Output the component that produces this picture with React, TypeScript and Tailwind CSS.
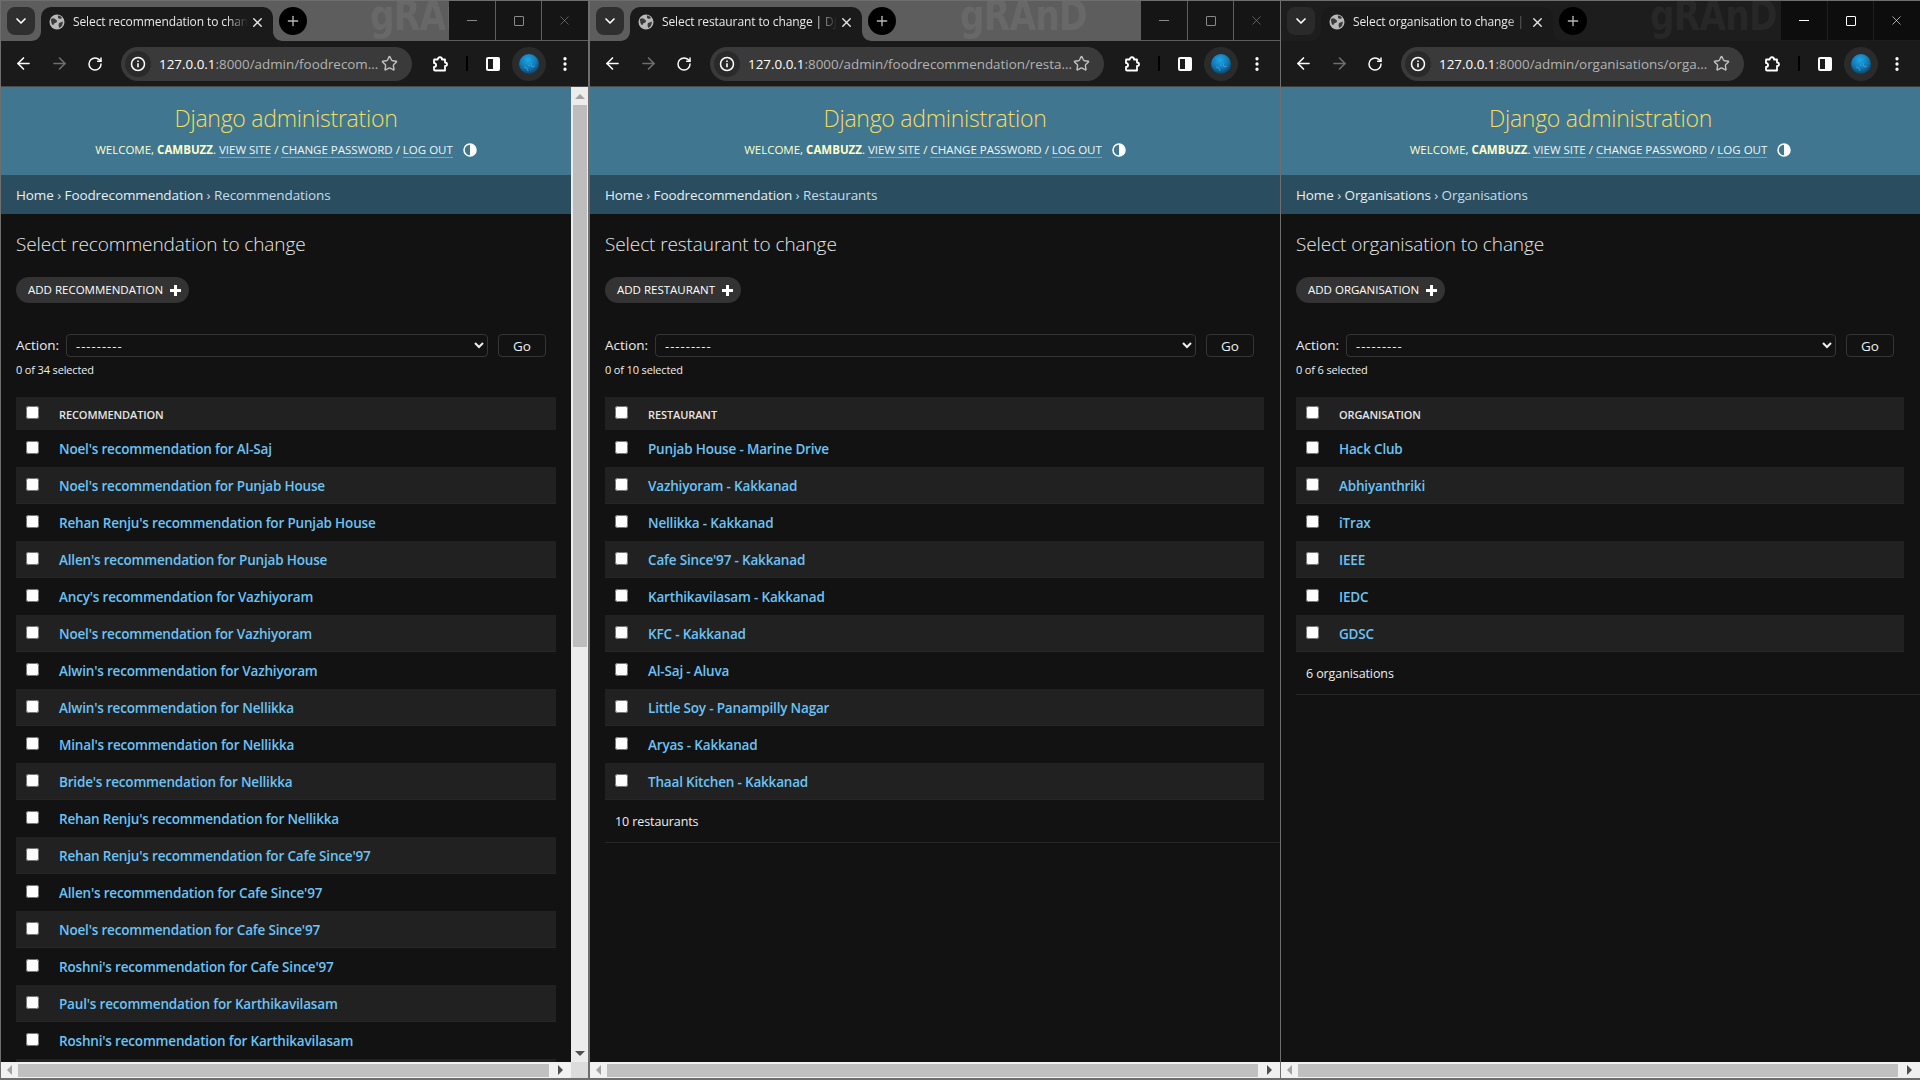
import React from "react";
import { ArrowLeft, ArrowRight, RotateCw, Star, Plus, X, ChevronDown, EllipsisVertical } from "lucide-react";

const recs = [
  "Noel's recommendation for Al-Saj",
  "Noel's recommendation for Punjab House",
  "Rehan Renju's recommendation for Punjab House",
  "Allen's recommendation for Punjab House",
  "Ancy's recommendation for Vazhiyoram",
  "Noel's recommendation for Vazhiyoram",
  "Alwin's recommendation for Vazhiyoram",
  "Alwin's recommendation for Nellikka",
  "Minal's recommendation for Nellikka",
  "Bride's recommendation for Nellikka",
  "Rehan Renju's recommendation for Nellikka",
  "Rehan Renju's recommendation for Cafe Since'97",
  "Allen's recommendation for Cafe Since'97",
  "Noel's recommendation for Cafe Since'97",
  "Roshni's recommendation for Cafe Since'97",
  "Paul's recommendation for Karthikavilasam",
  "Roshni's recommendation for Karthikavilasam",
  "Allen's recommendation for Karthikavilasam",
];
const rests = [
  "Punjab House - Marine Drive",
  "Vazhiyoram - Kakkanad",
  "Nellikka - Kakkanad",
  "Cafe Since'97 - Kakkanad",
  "Karthikavilasam - Kakkanad",
  "KFC - Kakkanad",
  "Al-Saj - Aluva",
  "Little Soy - Panampilly Nagar",
  "Aryas - Kakkanad",
  "Thaal Kitchen - Kakkanad",
];
const orgs = ["Hack Club", "Abhiyanthriki", "iTrax", "IEEE", "IEDC", "GDSC"];

function GlobeFav() {
  return (
    <svg width="16" height="16" viewBox="0 0 16 16" className="shrink-0">
      <circle cx="8" cy="8" r="7.5" fill="#b9b9b9" />
      <path d="M2 5c2-1 3-1 4 0s2 1 2 2-1 2-2 2-1 2-2 2-2-3-2-6zM9 1.500c2 .2 3 1 4 2.500l-2 1-2-1zM10 9c1 0 2-1 3.800-1.500C14 10 13 12.500 10.500 14c-1-1-.5-2-1-3z" fill="#3a3a3a" />
    </svg>
  );
}

function ExtIcon() {
  return (
    <svg width="18" height="18" viewBox="0 0 18 18" fill="none" stroke="#fff" strokeWidth="1.800" strokeLinejoin="round">
      <path d="M2.500 4.500h3.200c0-3 4.300-3 4.300 0h3v3c2.700 0 2.700 3.500 0 3.500v4.500H3c-.6 0-1-.4-1-1v-2.500c2.800 0 2.800-4 0-4V5c0-.3.200-.5.500-.5z" />
    </svg>
  );
}

function Avatar() {
  return (
    <div className="w-[34px] h-[34px] rounded-full bg-[#2b2b2b] flex items-center justify-center">
      <svg width="20" height="20" viewBox="0 0 20 20">
        <defs>
          <radialGradient id="gl" cx="45%" cy="30%" r="75%">
            <stop offset="0%" stopColor="#1ea7e6" />
            <stop offset="55%" stopColor="#0f79b8" />
            <stop offset="100%" stopColor="#0b3a5c" />
          </radialGradient>
        </defs>
        <circle cx="10" cy="10" r="10" fill="url(#gl)" />
        <path d="M5 13l3 1 1 3M12 9l1 4 3-1M9 11l2 1" stroke="#5f9fc4" strokeWidth="0.700" fill="none" />
      </svg>
    </div>
  );
}

function TabCorner({ side, color }: { side: "l" | "r"; color: string }) {
  return (
    <svg
      width="10"
      height="10"
      viewBox="0 0 10 10"
      className={side === "l" ? "absolute bottom-0 -left-[10px]" : "absolute bottom-0 -right-[10px]"}
    >
      <path d={side === "l" ? "M10 0v10H0c6 0 10-4 10-10z" : "M0 0v10h10C4 10 0 6 0 0z"} fill={color} />
    </svg>
  );
}

function Triangle({ dir, color }: { dir: "l" | "r" | "u" | "d"; color: string }) {
  const d = { l: "M6 0v10L1 5z", r: "M1 0v10l5-5z", u: "M0 6h10L5 1z", d: "M0 1h10L5 6z" }[dir];
  const s = dir === "l" || dir === "r" ? { w: 7, h: 10 } : { w: 10, h: 7 };
  return (
    <svg width={s.w} height={s.h} viewBox={`0 0 ${s.w} ${s.h}`}>
      <path d={d} fill={color} />
    </svg>
  );
}

function Chrome({
  active,
  title,
  urlRest,
  logoClass,
}: {
  active?: boolean;
  title: string;
  urlRest: string;
  logoClass: string;
}) {
  return (
    <>
      <div className={`relative h-[40px] shrink-0 flex overflow-hidden ${active ? "bg-[#1d1d1d]" : "bg-[#5d5d5d]"}`}>
        <span
          className={`absolute top-[-10px] origin-left font-['DejaVu_Sans'] font-bold text-[42px] leading-[50px] tracking-[-1px] scale-x-[0.82] select-none ${logoClass} ${
            active ? "text-[#272727]" : "text-[#686868]"
          }`}
        >
          gRAnD
        </span>
        <div className="relative flex-1 flex items-start pt-[6px] pl-[6px]">
          <div className={`w-[28px] h-[28px] rounded-[8px] flex items-center justify-center ${active ? "bg-[#2a2a2a]" : "bg-[#2f2f2f]"}`}>
            <ChevronDown size={16} color="#fff" strokeWidth={2.5} />
          </div>
          <div className="relative ml-[6px] w-[232px] h-[34px] rounded-t-[10px] bg-[#1a1a1a] flex items-center pl-[8px] pb-[4px]">
            <TabCorner side="l" color="#1a1a1a" />
            <TabCorner side="r" color="#1a1a1a" />
            <GlobeFav />
            <span className="ml-[8px] w-[175px] overflow-hidden whitespace-nowrap text-[12px] tracking-[-0.1px] text-[#e8e8e8] [mask-image:linear-gradient(to_right,black_88%,transparent)]">
              {title}
            </span>
            <X size={15} color="#e8e8e8" strokeWidth={2.2} className="ml-[2px]" />
          </div>
          <div className="ml-[6px] w-[28px] h-[28px] rounded-full bg-black flex items-center justify-center">
            <Plus size={16} color="#b8b8b8" strokeWidth={2} />
          </div>
        </div>
        <div className={`relative flex h-[39px] pr-px ${active ? "bg-[#0d0d0d]" : "bg-[#151515]"}`}>
          {[0, 1, 2].map((i) => (
            <div
              key={i}
              className={`w-[46px] flex items-center justify-center ${i > 0 ? (active ? "border-l border-[#1f1f1f]" : "border-l border-[#5f5f5f]") : ""}`}
            >
              {i === 0 && <div className={`w-[10px] h-px ${active ? "bg-white" : "bg-[#8a8a8a]"}`} />}
              {i === 1 && <div className={`w-[10px] h-[10px] rounded-[1px] border ${active ? "border-white" : "border-[#8a8a8a]"}`} />}
              {i === 2 && <X size={15} color={active ? "#fff" : "#8a8a8a"} strokeWidth={1} />}
            </div>
          ))}
        </div>
      </div>
      <div className={`h-[46px] shrink-0 flex items-center pl-[4px] pr-[5px] bg-[#1a1a1a] border-b ${active ? "border-[#3a3a3a]" : "border-[#4a4a4a]"}`}>
        <div className="w-[36px] flex justify-center"><ArrowLeft size={19} color="#fff" strokeWidth={2} /></div>
        <div className="w-[36px] flex justify-center"><ArrowRight size={19} color="#6f6f6f" strokeWidth={2} /></div>
        <div className="w-[36px] flex justify-center"><RotateCw size={16} color="#fff" strokeWidth={2.2} /></div>
        <div className="ml-[8px] flex-1 min-w-0 h-[34px] rounded-full bg-[#3a3a3a] flex items-center pl-[4px] pr-[14px]">
          <div className="w-[26px] h-[26px] rounded-full bg-[#2a2a2a] flex items-center justify-center shrink-0">
            <svg width="16" height="16" viewBox="0 0 16 16" fill="none" stroke="#fff" strokeWidth="1.500">
              <circle cx="8" cy="8" r="6.500" />
              <path d="M8 7.200v4M8 4.500v1.500" strokeWidth="1.600" />
            </svg>
          </div>
          <span className="ml-[8px] pt-px flex-1 min-w-0 whitespace-nowrap text-[13.400px] text-[#ffffff]">
            127.0.0.1<span className="text-[#b3b3b3]">{urlRest}</span>
          </span>
          <Star size={17} color="#c0c0c0" strokeWidth={2} className="shrink-0 ml-[4px]" />
        </div>
        <div className="ml-[11px] w-[36px] flex justify-center"><ExtIcon /></div>
        <div className="w-[16px] flex justify-center"><div className="w-[2px] h-[15px] bg-black" /></div>
        <div className="w-[36px] flex justify-center">
          <div className="w-[14px] h-[14px] rounded-[2px] border-[2px] border-white flex justify-end"><div className="w-[5px] bg-white" /></div>
        </div>
        <div className="w-[36px] flex justify-center"><Avatar /></div>
        <div className="w-[36px] flex justify-center"><EllipsisVertical size={18} color="#fff" strokeWidth={2.4} /></div>
      </div>
    </>
  );
}

function Header({ app, model }: { app: string; model: string }) {
  return (
    <>
      <header className="h-[88px] shrink-0 bg-[#417690] flex flex-col items-center">
        <div className="mt-[13px] h-[36px] text-[23px] tracking-[-0.25px] leading-[36px] font-light text-[#f5dd5d]">Django administration</div>
        <div className="mt-[5px] flex items-center h-[18px] text-[11.500px] uppercase text-[#ffffcc] whitespace-pre">
          <span>Welcome, </span><strong className="font-bold">cambuzz</strong><span>. </span>
          <a className="border-b border-[#ffffff55] text-[#eef6f8] leading-[15px]">View site</a><span> / </span>
          <a className="border-b border-[#ffffff55] text-[#eef6f8] leading-[15px]">Change password</a><span> / </span>
          <a className="border-b border-[#ffffff55] text-[#eef6f8] leading-[15px]">Log out</a>
          <svg width="14" height="14" viewBox="0 0 14 14" className="ml-[10px]">
            <circle cx="7" cy="7" r="6" fill="none" stroke="#fff" strokeWidth="1.500" />
            <path d="M7 1a6 6 0 0 1 0 12z" fill="#fff" />
          </svg>
        </div>
      </header>
      <div className="h-[39px] shrink-0 bg-[#2a4d5f] flex items-center pl-[15px] pt-[2px] text-[13.500px] tracking-[-0.1px] text-[#c4dce8] whitespace-pre">
        <a className="text-[#e6eef2]">Home</a><span> › </span><a className="text-[#e6eef2]">{app}</a><span> › </span><span>{model}</span>
      </div>
    </>
  );
}

function Row({ text, alt }: { text: string; alt: boolean }) {
  return (
    <div className={`h-[37px] flex items-center border-b ${alt ? "bg-[#212121] border-[#272727]" : "bg-[#121212] border-[#121212]"}`}>
      <div className="w-[43px] pl-[10px] flex shrink-0">
        <input type="checkbox" readOnly className="w-[13px] h-[13px] m-0 mb-[2px]" />
      </div>
      <a className="pt-[2px] text-[13.500px] tracking-[-0.18px] font-semibold text-[#6cc3f5] whitespace-nowrap">{text}</a>
    </div>
  );
}

function Page({
  name,
  addLabel,
  total,
  head,
  rows,
  footer,
  appCrumb,
  modelCrumb,
  pad,
  actionRight,
}: {
  name: string;
  addLabel: string;
  total: number;
  head: string;
  rows: string[];
  footer?: string;
  appCrumb: string;
  modelCrumb: string;
  pad: string;
  actionRight: string;
}) {
  return (
    <div className="flex-1 min-w-0 flex flex-col overflow-hidden bg-[#121212]">
      <Header app={appCrumb} model={modelCrumb} />
      <main className={`pt-[17px] ${pad} text-[#eeeeee]`}>
        <h1 className="h-[26px] text-[19px] tracking-[-0.1px] leading-[26px] font-light text-[#e6e6e6] whitespace-nowrap">Select {name} to change</h1>
        <a className="mt-[20px] inline-flex items-center h-[26px] rounded-[13px] bg-[#333333] pl-[12px] pr-[8px] text-[11.500px] uppercase text-white whitespace-nowrap">
          {addLabel}
          <svg width="11" height="11" viewBox="0 0 11 11" className="ml-[7px]">
            <path d="M4 0h3v4h4v3H7v4H4V7H0V4h4z" fill="#fff" />
          </svg>
        </a>
        <div className={`mt-[31px] flex items-center h-[23px] ${actionRight}`}>
          <label className="w-[50px] shrink-0 text-[13.500px]">Action:</label>
          <select className="flex-1 min-w-0 h-[23px] pl-[5px] pt-px text-[13px] tracking-[1px] bg-[#121212] text-[#eeeeee] border border-[#353535] rounded-[4px] [color-scheme:dark]">
            <option>---------</option>
          </select>
          <button className="ml-[10px] w-[48px] h-[23px] pt-px shrink-0 text-[13.500px] bg-[#121212] border border-[#353535] rounded-[4px] text-[#eeeeee]">Go</button>
        </div>
        <div className="mt-[5px] h-[16px] text-[11px] tracking-[-0.15px] leading-[16px]">0 of {total} selected</div>
        <div className="mt-[19px]">
          <div className="h-[33px] bg-[#212121] flex items-center">
            <div className="w-[43px] pl-[10px] flex shrink-0">
              <input type="checkbox" readOnly className="w-[13px] h-[13px] m-0 mb-[2px]" />
            </div>
            <span className="pt-[3px] text-[11px] tracking-[-0.1px] font-semibold uppercase text-[#e6e6e6]">{head}</span>
          </div>
          {rows.map((r, i) => (
            <Row key={r} text={r} alt={i % 2 === 1} />
          ))}
        </div>
        {footer && (
          <div className="-mr-[16px] h-[43px] pl-[10px] pt-[3px] border-b border-[#272727] flex items-center text-[12.500px] tracking-[-0.1px]">{footer}</div>
        )}
      </main>
    </div>
  );
}

function HScroll({ corner }: { corner?: boolean }) {
  return (
    <div className="h-[16px] shrink-0 bg-[#f1f1f1] flex">
      <div className="flex-1 min-w-0 flex items-center">
        <div className="w-[17px] shrink-0 flex justify-center"><Triangle dir="l" color="#a3a3a3" /></div>
        <div className="h-[13px] flex-1 bg-[#c0c0c0]" />
        <div className="w-[22px] shrink-0 flex justify-center"><Triangle dir="r" color="#505050" /></div>
      </div>
      {corner && <div className="w-[17px] bg-[#dcdcdc]" />}
    </div>
  );
}

function VScroll() {
  return (
    <div className="w-[17px] shrink-0 bg-[#ececec] flex flex-col items-center">
      <div className="h-[18px] flex items-center justify-center"><Triangle dir="u" color="#a3a3a3" /></div>
      <div className="w-[14px] h-[542px] bg-[#bdbdbd]" />
      <div className="flex-1" />
      <div className="h-[18px] flex items-center justify-center"><Triangle dir="d" color="#505050" /></div>
    </div>
  );
}

export default function App() {
  return (
    <div className="w-[1920px] h-[1080px] overflow-hidden bg-[#6e6e6e] pt-px pb-[2px] pl-px flex font-['Open_Sans',sans-serif]">
      <section className="w-[587px] shrink-0 flex flex-col">
        <Chrome title="Select recommendation to change" urlRest=":8000/admin/foodrecom..." logoClass="left-[369px]" />
        <div className="flex-1 min-h-0 flex">
          <Page
            name="recommendation"
            addLabel="Add recommendation"
            total={34}
            head="Recommendation"
            rows={recs}
            appCrumb="Foodrecommendation"
            modelCrumb="Recommendations"
            pad="px-[15px]"
            actionRight="pr-[10px]"
          />
          <VScroll />
        </div>
        <HScroll corner />
      </section>
      <section className="ml-[2px] w-[690px] shrink-0 flex flex-col">
        <Chrome title="Select restaurant to change | Django" urlRest=":8000/admin/foodrecommendation/resta..." logoClass="left-[370px]" />
        <div className="flex-1 min-h-0 flex">
          <Page
            name="restaurant"
            addLabel="Add restaurant"
            total={10}
            head="Restaurant"
            rows={rests}
            footer="10 restaurants"
            appCrumb="Foodrecommendation"
            modelCrumb="Restaurants"
            pad="pl-[15px] pr-[16px]"
            actionRight="pr-[10px]"
          />
        </div>
        <HScroll />
      </section>
      <section className="ml-px flex-1 min-w-0 flex flex-col">
        <Chrome active title="Select organisation to change | Django" urlRest=":8000/admin/organisations/orga..." logoClass="left-[369px]" />
        <div className="flex-1 min-h-0 flex">
          <Page
            name="organisation"
            addLabel="Add organisation"
            total={6}
            head="Organisation"
            rows={orgs}
            footer="6 organisations"
            appCrumb="Organisations"
            modelCrumb="Organisations"
            pad="pl-[15px] pr-[16px]"
            actionRight="pr-[10px]"
          />
        </div>
        <HScroll />
      </section>
    </div>
  );
}
